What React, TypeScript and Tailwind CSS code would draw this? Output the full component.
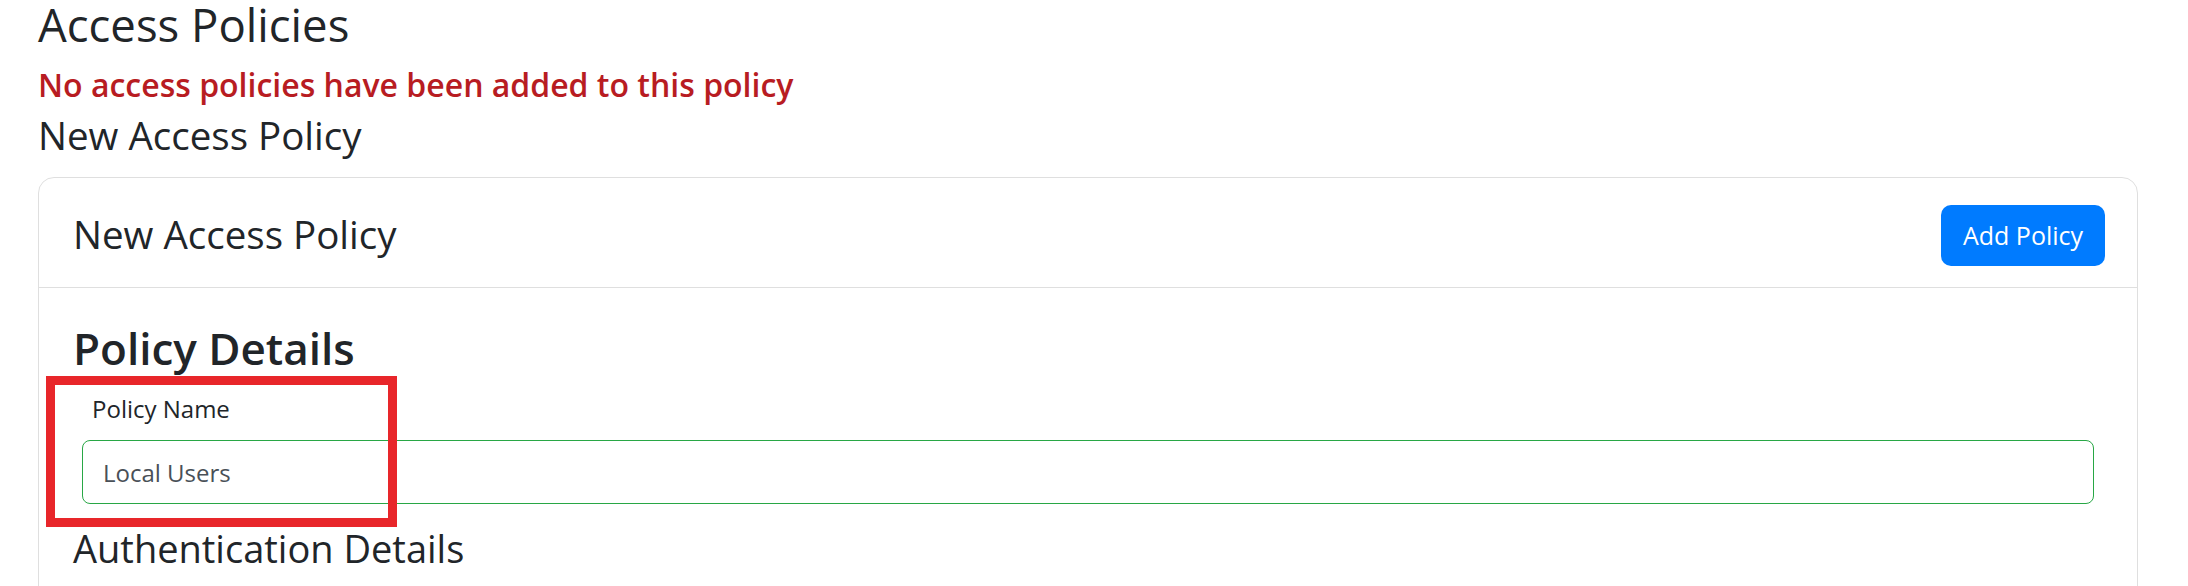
import React from 'react';

const font = { fontFamily: '"Open Sans", "Noto Sans", sans-serif' };

export default function App() {
  return (
    <div className="relative min-h-screen overflow-hidden bg-white text-[#212529] pl-[38px] pr-[50px]" style={font}>
      <h2 className="text-[45.5px] leading-[48px] font-normal">Access Policies</h2>
      <p className="mt-[17px] text-[32px] leading-[40px] font-semibold text-[#b81c22]">
        No access policies have been added to this policy
      </p>
      <h3 className="mt-[6px] text-[38.5px] leading-[48px] font-normal">New Access Policy</h3>

      <div className="mt-[18px] border border-[#dfdfdf] rounded-[16px]">
        <div className="flex items-start justify-between h-[110px] border-b border-[#dfdfdf] pl-[34px] pr-[32px]">
          <h3 className="mt-[32px] text-[38.5px] leading-[48px] font-normal">New Access Policy</h3>
          <button className="mt-[27px] w-[164px] h-[61px] rounded-[10px] bg-[#007bff] text-white text-[25px]">
            Add Policy
          </button>
        </div>
        <div className="pl-[34px] pr-[43px] pt-[33px] pb-[80px]">
          <h2 className="text-[44px] leading-[54px] font-semibold">Policy Details</h2>
          <div className="pl-[9px]">
            <label className="block mt-[18px] text-[24px] leading-[32px] pl-[10px]">Policy Name</label>
            <input
              readOnly
              value="Local Users"
              className="block mt-[15px] w-full h-[64px] px-[20px] text-[24px] text-[#495057] border-[1.5px] border-[#28a745] rounded-[8px] outline-none"
              style={font}
            />
          </div>
          <h4 className="mt-[22px] text-[38px] leading-[44px] font-normal">Authentication Details</h4>
        </div>
      </div>

      <div className="pointer-events-none absolute left-[46px] top-[376px] w-[351px] h-[151px] border-[9px] border-[#e8262a]" />
    </div>
  );
}
